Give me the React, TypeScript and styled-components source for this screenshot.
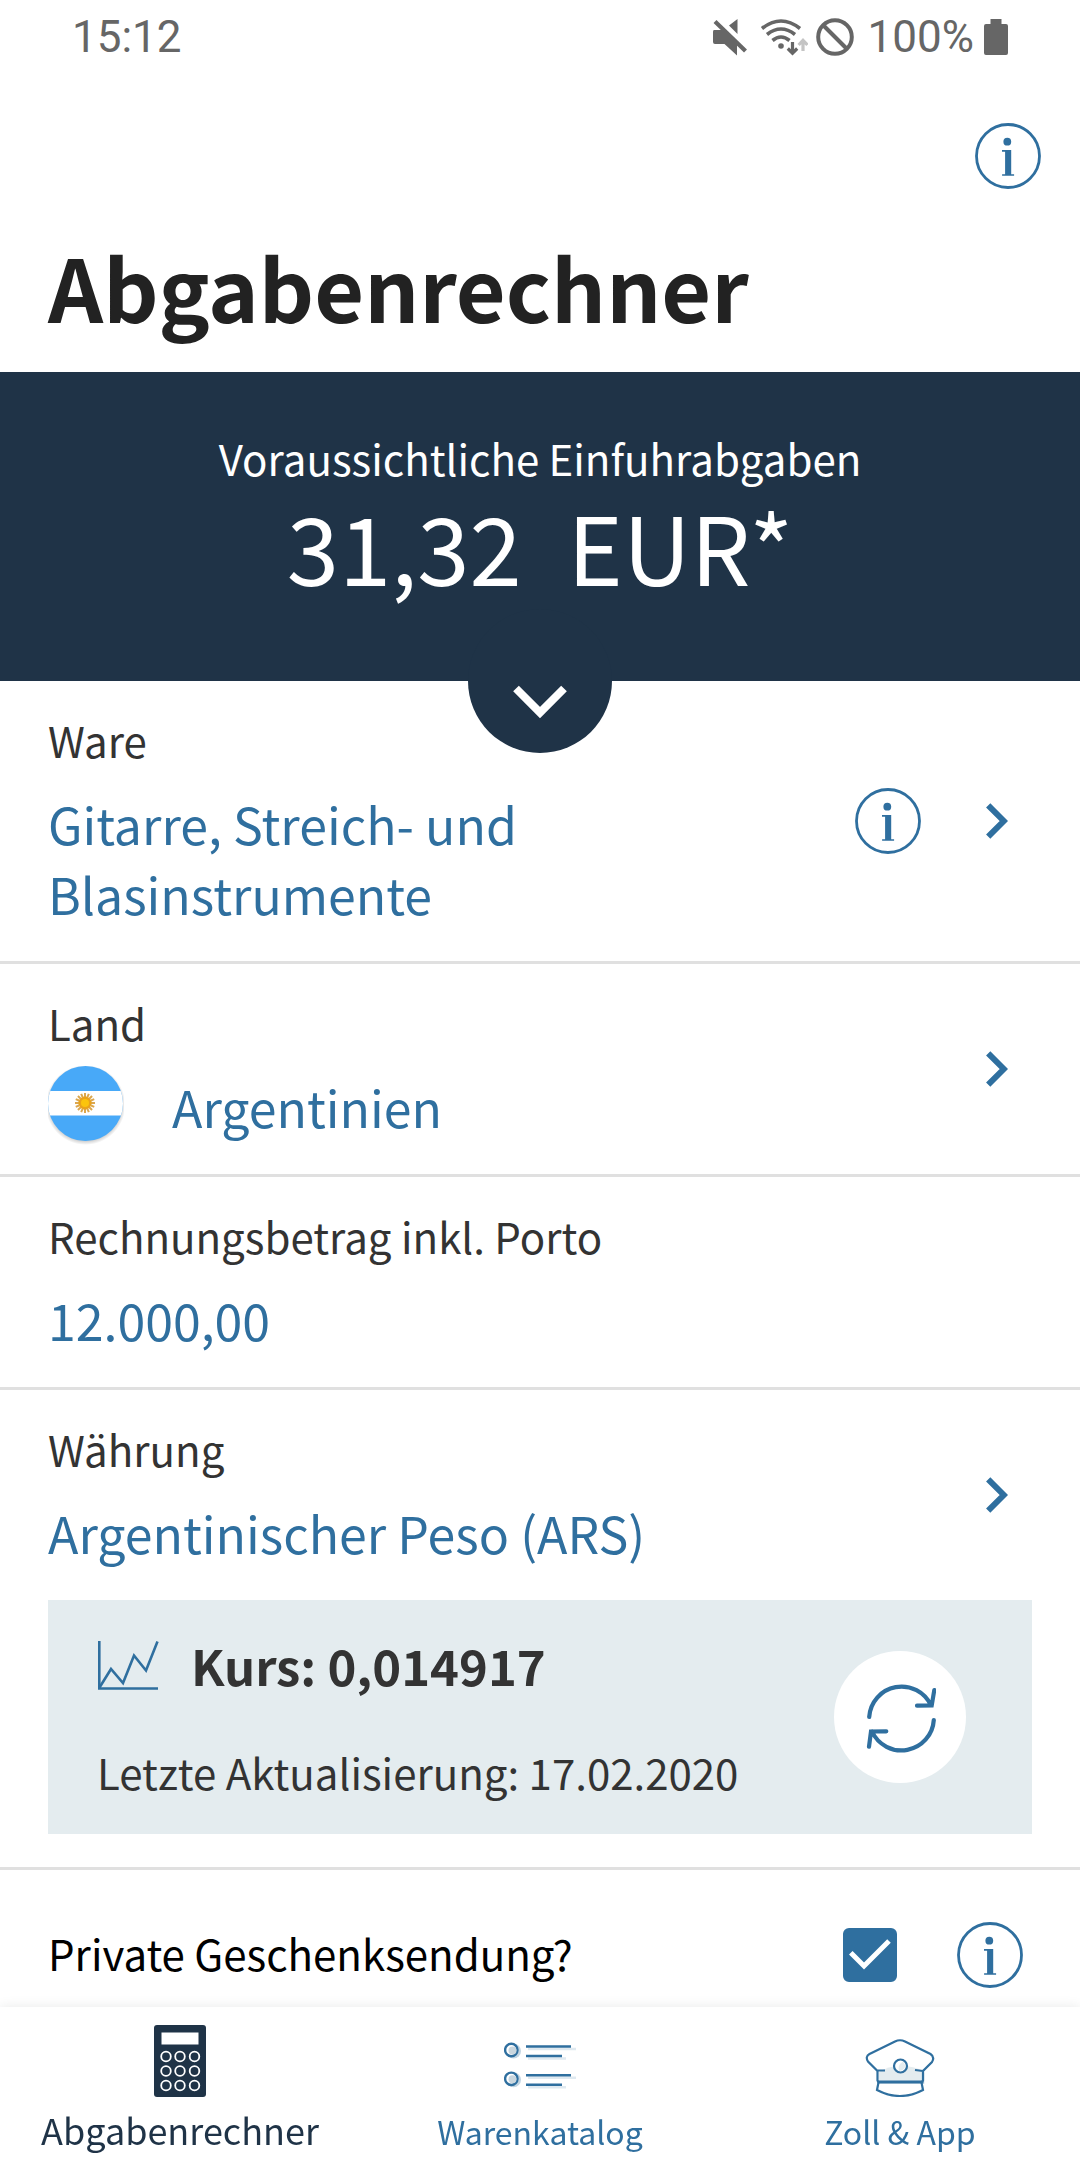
import React, { useState } from 'react';
import styled, { createGlobalStyle } from 'styled-components';

const color = {
  navy: '#1f3347',
  blue: '#2f6f9f',
  ink: '#222222',
  text: '#333333',
  line: '#e0e0e0',
  panel: '#e4ecef',
  status: '#666666',
};

const GlobalStyle = createGlobalStyle`
  *, *::before, *::after { box-sizing: border-box; }
  body {
    margin: 0;
    background: #fff;
    color: ${color.text};
    font-family: "Noto Sans CJK SC", "Noto Sans", sans-serif;
  }
  button, input {
    margin: 0;
    padding: 0;
    border: 0;
    background: none;
    color: inherit;
    font: inherit;
    text-align: left;
  }
  button { cursor: pointer; }
  svg { display: block; flex: none; }
`;

const Page = styled.div`
  display: flex;
  flex-direction: column;
  min-height: 100vh;
`;

const StatusBar = styled.div`
  display: flex;
  align-items: center;
  justify-content: space-between;
  height: 72px;
  padding: 2px 72px 0;
  color: ${color.status};
  font: 44px/70px Roboto, sans-serif;
`;

const StatusIcons = styled.div`
  display: flex;
  align-items: center;
  gap: 8px;
`;

const Charge = styled.span`
  margin: 0 2px 0 6px;
`;

const Header = styled.header`
  display: flex;
  flex-direction: column;
  padding: 51px 39px 26px 48px;
`;

const Title = styled.h1`
  margin: 37px 0 0;
  color: ${color.ink};
  font-size: 86px;
  font-weight: 700;
  line-height: 120px;
`;

const InfoButton = styled.button<{ $end?: boolean }>`
  flex: none;
  align-self: ${(p) => (p.$end ? 'flex-end' : 'center')};
  width: 66px;
  height: 66px;
`;

const Banner = styled.section`
  position: relative;
  z-index: 1;
  padding: 56px 48px 79px;
  background: ${color.navy};
  color: #fff;
  text-align: center;
`;

const BannerLabel = styled.div`
  font-size: 42px;
  line-height: 60px;
`;

const Amount = styled.div`
  display: flex;
  justify-content: center;
  gap: 46px;
  font-size: 94px;
  line-height: 114px;
`;

const Expand = styled.button`
  position: absolute;
  bottom: -72px;
  left: calc(50% - 72px);
  display: flex;
  justify-content: center;
  width: 144px;
  height: 144px;
  padding-top: 76px;
  border-radius: 50%;
  background: ${color.navy};
`;

const Main = styled.main`
  flex: 1;
`;

const Section = styled.section`
  border-bottom: 3px solid ${color.line};
`;

const Row = styled.div`
  display: flex;
  align-items: center;
  padding-right: 72px;
`;

const Field = styled.button`
  display: flex;
  flex: 1;
  flex-direction: column;
  gap: 18px;
  min-width: 0;
  padding: 29px 48px 33px;
`;

const AmountField = styled(Field).attrs({ as: 'label' })``;

const FieldLabel = styled.span`
  font-size: 42px;
  line-height: 60px;
`;

const FieldValue = styled.span`
  display: flex;
  align-items: center;
  gap: 48px;
  max-width: 640px;
  color: ${color.blue};
  font-size: 50px;
  line-height: 70px;
`;

const FieldInput = styled.input`
  width: 100%;
  height: 70px;
  color: ${color.blue};
  font-size: 50px;
  line-height: 70px;
  outline: none;
`;

const FlagBox = styled.span`
  display: flex;
  align-items: center;
  height: 70px;
`;

const Go = styled.button`
  display: flex;
  align-items: center;
  height: 66px;
  margin-left: 65px;
`;

const RatePanel = styled.div`
  display: flex;
  align-items: center;
  justify-content: space-between;
  margin: 0 48px 33px;
  padding: 30px 66px 30px 49px;
  background: ${color.panel};
`;

const RateText = styled.div`
  display: flex;
  flex-direction: column;
  gap: 40px;
`;

const Rate = styled.div`
  display: flex;
  align-items: center;
  gap: 32px;
  font-size: 49px;
  font-weight: 700;
  line-height: 70px;
`;

const Updated = styled.div`
  font-size: 42px;
  line-height: 64px;
`;

const Refresh = styled.button`
  display: flex;
  align-items: center;
  justify-content: center;
  width: 132px;
  height: 132px;
  border-radius: 50%;
  background: #fff;
`;

const GiftRow = styled.div`
  display: flex;
  align-items: center;
  gap: 60px;
  padding: 52px 57px 19px 48px;
`;

const GiftLabel = styled.label`
  flex: 1;
  padding-bottom: 4px;
  color: #000;
  font-size: 42px;
  line-height: 60px;
`;

const CheckWrap = styled.span`
  display: grid;
  width: 54px;
  height: 54px;

  > * { grid-area: 1 / 1; }
  svg { z-index: 1; pointer-events: none; }
`;

const Check = styled.input`
  appearance: none;
  width: 54px;
  height: 54px;
  border: 4px solid ${color.blue};
  border-radius: 6px;
  background: #fff;

  &:checked { background: ${color.blue}; }
`;

const TabBar = styled.nav`
  position: sticky;
  bottom: 0;
  z-index: 2;
  display: grid;
  grid-template-columns: repeat(3, 1fr);
  background: #fff;
  box-shadow: 0 0 12px rgba(0, 0, 0, 0.09);
`;

const Tab = styled.a<{ $active?: boolean }>`
  display: flex;
  flex-direction: column;
  align-items: center;
  padding-top: 18px;
  color: ${(p) => (p.$active ? color.navy : color.blue)};
  text-decoration: none;
`;

const TabLine = styled.span`
  height: 61px;
  font-size: 36px;
  line-height: 64px;
  white-space: nowrap;
`;

const TabText = styled.span<{ $active?: boolean }>`
  font-size: ${(p) => (p.$active ? 36 : 32)}px;
`;

const InfoIcon = () => (
  <svg width="66" height="66" viewBox="0 0 66 66" fill={color.blue}>
    <circle cx="33" cy="33" r="31.5" fill="none" stroke={color.blue} strokeWidth="2.8" />
    <circle cx="32.3" cy="18.7" r="3.9" />
    <path d="M27 27h9.200v24.200h2.900v1.500h-12v-1.500h3v-22.500h-3.100z" />
  </svg>
);

const ChevronIcon = () => (
  <svg width="22" height="36" viewBox="0 0 22 36" fill="none" stroke={color.blue} strokeWidth="6">
    <path d="M2.200 2.300 17.800 18 2.200 33.700" />
  </svg>
);

const Info = ({ label, end }: { label: string; end?: boolean }) => (
  <InfoButton $end={end} aria-label={label}>
    <InfoIcon />
  </InfoButton>
);

const ChevronDown = () => (
  <svg width="54" height="34" viewBox="0 0 54 34" fill="none" stroke="#fff" strokeWidth="8">
    <path d="M3 3.500 27 27.500 51 3.500" />
  </svg>
);

const MuteIcon = () => (
  <svg width="40" height="38" viewBox="0 0 40 38" fill={color.status}>
    <path d="M2 12h9l14 13.500v12L12.500 26H3q-2 0-2-2V14q0-2 1-2zM25.500 1v15L17 7.500z" />
    <path d="M3 3.500 33.500 33" stroke={color.status} strokeWidth="4.200" />
  </svg>
);

const WifiIcon = () => (
  <svg width="48" height="38" viewBox="0 0 48 38" fill="none" stroke={color.status} strokeWidth="3.600">
    <path d="M2 10.500q19-15 38 0M7 16.500q14-11 28 0M12.500 22.500q8.500-7 17 0" />
    <circle cx="21" cy="28" r="2.800" fill={color.status} stroke="none" />
    <path d="M32.500 24v11M27.800 30.500l4.700 4.700 4.700-4.700" strokeWidth="3.200" />
    <path d="M43 33V23M38.600 27l4.400-4.600 4.400 4.600" stroke="#c4c4c4" strokeWidth="3.200" />
  </svg>
);

const BlockedIcon = () => (
  <svg width="38" height="38" viewBox="0 0 38 38" fill="none" stroke={color.status} strokeWidth="4">
    <circle cx="19" cy="19" r="16.800" />
    <path d="M7 7l24 24" />
  </svg>
);

const BatteryIcon = () => (
  <svg width="24" height="36" viewBox="0 0 24 36" fill={color.status}>
    <path d="M6.500 0h11v5H22q2 0 2 2v27q0 2-2 2H2q-2 0-2-2V7q0-2 2-2h4.500z" />
  </svg>
);

const rays = Array.from({ length: 16 }, (_, i) => (i * 360) / 16);

const FlagIcon = () => (
  <svg width="76" height="80" viewBox="0 0 76 80">
    <defs>
      <clipPath id="flag-disc">
        <circle cx="37.500" cy="37.500" r="37.500" />
      </clipPath>
      <radialGradient id="flag-shade">
        <stop offset="0.880" stopColor="#000" stopOpacity="0.220" />
        <stop offset="1" stopColor="#000" stopOpacity="0" />
      </radialGradient>
    </defs>
    <circle cx="37.500" cy="39" r="40" fill="url(#flag-shade)" />
    <g clipPath="url(#flag-disc)">
      <rect width="75" height="75" fill="#48a9f8" />
      <rect y="25" width="75" height="24.500" fill="#fff" />
    </g>
    {rays.map((a) => (
      <path key={a} d="M37 31v-4" stroke="#dba74e" strokeWidth="2" transform={`rotate(${a} 37 37)`} />
    ))}
    <circle cx="37" cy="37" r="6.500" fill="#e8a21c" />
    <circle cx="37" cy="37" r="4" fill="#fbc40c" />
  </svg>
);

const ChartIcon = () => (
  <svg width="62" height="50" viewBox="0 0 62 50" fill="none" stroke={color.blue} strokeWidth="2.600">
    <path d="M2.300 1v47.500H61" />
    <path d="M2.500 47.500 14 29l12 14L37 15.500 49 30.500 60.500 1.500" />
  </svg>
);

const RefreshIcon = () => (
  <svg width="72" height="72" viewBox="0 0 72 72" fill="none" stroke={color.blue} strokeWidth="4.200" strokeLinecap="round">
    <path d="M5.200 36A32.400 32.400 0 0 1 67 24.500M70.300 9 67.700 24.500 53 24.700" />
    <path d="M69.800 39A32.400 32.400 0 0 1 8 50.500M5 65.700 7 50.500 22.300 50.300" />
  </svg>
);

const CheckIcon = () => (
  <svg width="54" height="54" viewBox="0 0 54 54" fill="none" stroke="#fff" strokeWidth="5">
    <path d="M7.800 24.800 21 38 46 13" />
  </svg>
);

const keyRows = [31.500, 46, 60.500];
const keyCols = [12, 26, 40.500];

const CalculatorIcon = () => (
  <svg width="52" height="72" viewBox="0 0 52 72">
    <rect width="52" height="72" rx="3" fill={color.navy} />
    <rect x="7.500" y="7.500" width="37" height="12" fill="#fff" />
    {keyRows.map((y) =>
      keyCols.map((x) => (
        <circle key={`${x}-${y}`} cx={x} cy={y} r="4.800" fill="none" stroke="#fff" strokeWidth="1.800" />
      )),
    )}
  </svg>
);

const ListIcon = () => (
  <svg width="72" height="72" viewBox="0 0 72 72" fill="none">
    {[25.500, 54.300].map((y) => (
      <g key={y}>
        <circle cx="9.500" cy={y + 0.500} r="7.500" fill="#c3d5e2" />
        <circle cx="7.300" cy={y - 0.500} r="6.200" fill="#fff" stroke={color.blue} strokeWidth="2.400" />
        <circle cx="8.500" cy={y} r="4" fill="#c9d6de" />
        <path d={`M24 ${y - 1.500}h48M24 ${y + 8}h38`} stroke="#dfe9f0" strokeWidth="2.400" />
        <path d={`M22 ${y - 4}h45M22 ${y + 5.500}h36`} stroke={color.blue} strokeWidth="2.600" />
      </g>
    ))}
  </svg>
);

const CapIcon = () => (
  <svg width="72" height="72" viewBox="0 0 72 72" fill="none" stroke={color.blue} strokeWidth="2.200">
    <path d="M15 47q9-6 22-6t22 5l1.500 2v11H15z" fill={color.panel} stroke="none" />
    <path d="M13.500 46 4 36.500Q1 31.500 5.500 29L31 16.500q5-2.500 10 0L66.500 29q4.500 3 1.500 8L59 46v9.500l-1.500 2 1.500 7.500q-23 12-46 0l1.500-7.500-1-2zM13 45.500h8M51 45l8 1" />
    <path d="M13.500 57h46" strokeWidth="3" />
    <circle cx="36.500" cy="41" r="6.500" fill="#fff" />
    <path d="M39 36.500q-6 4-4 9.500 7-1 6-6z" fill={color.panel} stroke="none" />
  </svg>
);

export default function App() {
  const [gift, setGift] = useState(true);
  const [total, setTotal] = useState('12.000,00');

  return (
    <Page>
      <GlobalStyle />
      <StatusBar>
        <span>15:12</span>
        <StatusIcons>
          <MuteIcon />
          <WifiIcon />
          <BlockedIcon />
          <Charge>100%</Charge>
          <BatteryIcon />
        </StatusIcons>
      </StatusBar>
      <Header>
        <Info label="Informationen" end />
        <Title>Abgabenrechner</Title>
      </Header>
      <Banner>
        <BannerLabel>Voraussichtliche Einfuhrabgaben</BannerLabel>
        <Amount>
          <span>31,32</span>
          <span>EUR*</span>
        </Amount>
        <Expand aria-label="Details anzeigen">
          <ChevronDown />
        </Expand>
      </Banner>
      <Main>
        <Section>
          <Row>
            <Field>
              <FieldLabel>Ware</FieldLabel>
              <FieldValue>Gitarre, Streich- und Blasinstrumente</FieldValue>
            </Field>
            <Info label="Informationen zur Ware" />
            <Go aria-label="Ware ändern">
              <ChevronIcon />
            </Go>
          </Row>
        </Section>
        <Section>
          <Row>
            <Field>
              <FieldLabel>Land</FieldLabel>
              <FieldValue>
                <FlagBox>
                  <FlagIcon />
                </FlagBox>
                Argentinien
              </FieldValue>
            </Field>
            <Go aria-label="Land ändern">
              <ChevronIcon />
            </Go>
          </Row>
        </Section>
        <Section>
          <Row>
            <AmountField>
              <FieldLabel>Rechnungsbetrag inkl. Porto</FieldLabel>
              <FieldInput value={total} inputMode="decimal" onChange={(e) => setTotal(e.target.value)} />
            </AmountField>
          </Row>
        </Section>
        <Section>
          <Row>
            <Field>
              <FieldLabel>Währung</FieldLabel>
              <FieldValue>Argentinischer Peso (ARS)</FieldValue>
            </Field>
            <Go aria-label="Währung ändern">
              <ChevronIcon />
            </Go>
          </Row>
          <RatePanel>
            <RateText>
              <Rate>
                <ChartIcon />
                Kurs: 0,014917
              </Rate>
              <Updated>Letzte Aktualisierung: 17.02.2020</Updated>
            </RateText>
            <Refresh aria-label="Kurs aktualisieren">
              <RefreshIcon />
            </Refresh>
          </RatePanel>
        </Section>
        <GiftRow>
          <GiftLabel htmlFor="gift">Private Geschenksendung?</GiftLabel>
          <CheckWrap>
            <Check id="gift" type="checkbox" checked={gift} onChange={(e) => setGift(e.target.checked)} />
            {gift && <CheckIcon />}
          </CheckWrap>
          <Info label="Informationen zur Geschenksendung" />
        </GiftRow>
      </Main>
      <TabBar>
        <Tab href="#abgabenrechner" $active>
          <CalculatorIcon />
          <TabLine>
            <TabText $active>Abgabenrechner</TabText>
          </TabLine>
        </Tab>
        <Tab href="#warenkatalog">
          <ListIcon />
          <TabLine>
            <TabText>Warenkatalog</TabText>
          </TabLine>
        </Tab>
        <Tab href="#zoll-app">
          <CapIcon />
          <TabLine>
            <TabText>Zoll &amp; App</TabText>
          </TabLine>
        </Tab>
      </TabBar>
    </Page>
  );
}
